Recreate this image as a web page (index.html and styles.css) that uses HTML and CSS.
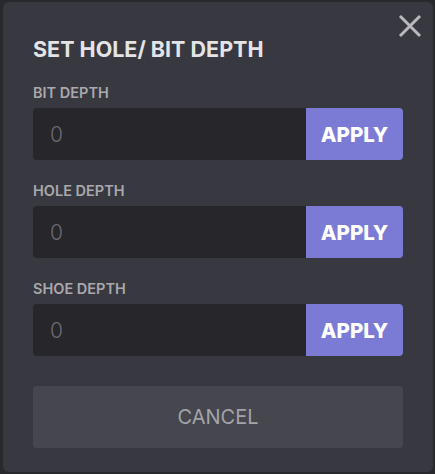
FILE: index.html
```html
<!DOCTYPE html>
<html>
<head>
<meta charset="utf-8">
<link rel="stylesheet" href="styles.css">
</head>
<body>
<div class="modal">
  <button class="close" aria-label="Close">
    <svg width="24" height="24" viewBox="0 0 24 24"><path d="M2 2 L22 22 M22 2 L2 22" stroke="#b9b9bd" stroke-width="3" fill="none"/></svg>
  </button>
  <h1 class="title">SET HOLE/ BIT DEPTH</h1>
  <div class="field">
    <label class="label">BIT DEPTH</label>
    <div class="row">
      <input class="input" type="text" placeholder="0">
      <button class="apply">APPLY</button>
    </div>
  </div>
  <div class="field">
    <label class="label">HOLE DEPTH</label>
    <div class="row">
      <input class="input" type="text" placeholder="0">
      <button class="apply">APPLY</button>
    </div>
  </div>
  <div class="field">
    <label class="label">SHOE DEPTH</label>
    <div class="row">
      <input class="input" type="text" placeholder="0">
      <button class="apply">APPLY</button>
    </div>
  </div>
  <button class="cancel">CANCEL</button>
</div>
</body>
</html>
```
FILE: styles.css
```css
html, body {
  margin: 0;
  padding: 0;
  background: #28292d;
  font-family: Inter, "Liberation Sans", sans-serif;
}
body {
  padding: 2px 2px 2px 3px;
  width: 435px;
  height: 474px;
  box-sizing: border-box;
}
.modal {
  position: relative;
  width: 430px;
  height: 470px;
  box-sizing: border-box;
  background: #383840;
  border-radius: 6px;
  padding: 35px 30px 0 30px;
  display: flex;
  flex-direction: column;
}
.close {
  position: absolute;
  top: 12px;
  right: 11px;
  background: none;
  border: 0;
  padding: 0;
  width: 24px;
  height: 24px;
  cursor: pointer;
}
.close svg { display: block; }
.title {
  margin: 0;
  font-size: 21.5px;
  line-height: 24px;
  font-weight: 700;
  color: #e4e4e6;
}
.field {
  display: flex;
  flex-direction: column;
}
.field:first-of-type { margin-top: 24px; }
.field + .field { margin-top: 23px; }
.label {
  font-size: 14.5px;
  line-height: 16px;
  font-weight: 600;
  color: #a9a9ad;
  margin-bottom: 7px;
}
.row {
  display: flex;
  height: 52px;
}
.input {
  flex: 1;
  min-width: 0;
  border: 0;
  outline: none;
  background: #26262b;
  border-radius: 4px 0 0 4px;
  padding: 0 17px;
  font-family: Inter, "Liberation Sans", sans-serif;
  font-size: 21px;
  font-weight: 300;
  color: #dcdce0;
}
.input::placeholder { color: #6b6b71; }
.apply {
  width: 97px;
  border: 0;
  background: #7b7bd6;
  border-radius: 0 4px 4px 0;
  color: #ffffff;
  font-family: Inter, "Liberation Sans", sans-serif;
  font-size: 20.5px;
  font-weight: 800;
  padding: 0;
}
.cancel {
  margin-top: 30px;
  height: 62px;
  border: 0;
  border-radius: 4px;
  background: #46464f;
  color: #a3a3a8;
  font-family: Inter, "Liberation Sans", sans-serif;
  font-size: 20px;
  font-weight: 400;
}
```
